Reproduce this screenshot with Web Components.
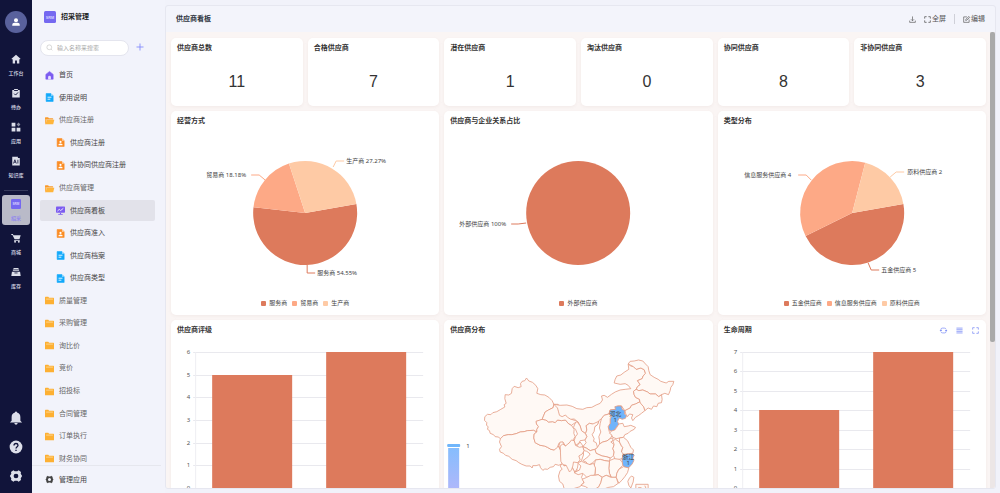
<!DOCTYPE html>
<html lang="zh-CN">
<head>
<meta charset="utf-8">
<title>供应商看板</title>
<style>
  html, body { height: 100%; margin: 0; }
  body {
    background: #f1f2fa;
    color: #333;
    font: 7px/10px "Noto Sans", "Noto Sans CJK SC", sans-serif;
  }
</style>
</head>
<body>
<srm-app></srm-app>

<script>
const ICONS = {
  user: '<circle cx="8" cy="5" r="3.2" fill="currentColor"/><path d="M2 14v-1.500q0-3.500 3.500-3.500h5q3.500 0 3.500 3.500V14z" fill="currentColor"/>',
  home: '<path d="M8 1 .8 7.600l1 1.100.9-.8V15h3.800v-4.500h3V15h3.800V7.900l.9.8 1-1.100z" fill="currentColor"/>',
  todo: '<path d="M2 3h3V1.500h6V3h3v12H2z" fill="currentColor"/><path d="M5 4h6M5 9l2.300 2.300L11.300 7" fill="none" stroke="#11143a" stroke-width="1.500"/>',
  apps: '<path d="M1 1h6v6H1zM1 9h6v6H1zM9 9h6v6H9z" fill="currentColor"/><path d="m12 .8 3 3.200-3 3.200-3-3.200z" fill="currentColor" opacity=".6"/>',
  book: '<path d="M2 1h9v2h3v12H2z" fill="currentColor"/><path d="m4 12 2.200-6L8.500 12M5 10h2.500M11 6v6" fill="none" stroke="#11143a" stroke-width="1.300"/>',
  srm: '<rect x="0" y="0" width="16" height="16" rx="2" fill="#7568f0"/><text x="8" y="10" text-anchor="middle" font-family="Liberation Sans, sans-serif" font-weight="700" font-size="5" fill="#d5d0ff">SRM</text>',
  cart: '<path d="M.5 1.500h2.600l.8 2H15.500L13.500 10H5.800L2.300 3H.5zM5 11h9v1.300H5z" fill="currentColor"/><circle cx="6.500" cy="14" r="1.500" fill="currentColor"/><circle cx="12.500" cy="14" r="1.500" fill="currentColor"/>',
  stock: '<path d="M4 1.500h8v1.500H4zM3 4h10v2H3zM1.500 7.500h13l1 7H.5z" fill="currentColor"/><path d="M5.500 9.500h5" stroke="#11143a" stroke-width="1.300"/>',
  bell: '<path d="M8 .5q1.200 0 1.200 1.300C12 2.500 13 4.500 13 7v4l2 2H1l2-2V7c0-2.500 1-4.500 3.800-5.200Q6.800.5 8 .5zM6 13.800h4Q9.500 15.700 8 15.700T6 13.800z" fill="currentColor"/>',
  help: '<circle cx="8" cy="8" r="7.300" fill="currentColor"/><path d="M5.700 6.300q.1-2.300 2.300-2.300t2.300 2.100C10.300 7.700 8 7.700 8 9.800M8 11v1.600" fill="none" stroke="#11143a" stroke-width="1.500"/>',
  gear: '<path fill-rule="evenodd" d="m5 1.500 1.500 1h3l1.500-1 2.700 2-.3 1.800L15 8l-1.600 2.700.3 1.800-2.700 2-1.500-1h-3l-1.500 1-2.700-2 .3-1.800L1 8l1.600-2.700-.3-1.800zM8 5.300a2.700 2.700 0 1 0 0 5.400 2.700 2.700 0 1 0 0-5.400z" fill="currentColor"/>',
  house: '<path d="M8 .8 1.500 6v8.500h13V6z" fill="#7c5cf0" stroke="#7c5cf0" stroke-linejoin="round"/><path d="M5.500 15v-4a2.500 2.500 0 0 1 5 0v4z" fill="#e6dfff"/>',
  doc: '<path d="M2 1h8.500L14.500 5v10H2z" fill="#12a9fb" stroke="#12a9fb" stroke-linejoin="round"/><path d="M10.500 1v4h4z" fill="#9fdcff"/><path d="M4.500 7.500h7M4.500 11h5" stroke="#fff" stroke-width="1.500"/>',
  form: '<path d="M2 1h8.500L14.500 5v10H2z" fill="#fb8d25" stroke="#fb8d25" stroke-linejoin="round"/><path d="M10.500 1v4h4z" fill="#ffd6ab"/><circle cx="8" cy="7" r="1.900" fill="#fff"/><path d="M4.500 12.800V11q3.500-2.600 7 0v1.800z" fill="#fff"/>',
  open: '<path d="M0 3q0-1 1-1h4.500l1.500 1.800h6.500q1 0 1 1V6H0z" fill="#f99a2b"/><path d="M3 6.500h13.500L14.500 14.500H1z" fill="#ffb53b"/><path d="M0 5v9.500h1L3 6.500z" fill="#fdb04a"/>',
  folder: '<path d="M0 2.500q0-1 1-1h4.800l1.500 1.800h7.700q1 0 1 1v10.200H0z" fill="#fdb033"/><path d="M2 5.500h12" stroke="#fff0d2" stroke-width="1"/>',
  board: '<rect x="0" y="1" width="16" height="11" rx="1.200" fill="#7c5cf0"/><path d="M7 12h2v2h3v1.500H4V14h3z" fill="#7c5cf0"/><path d="m2.500 9 3.300-3 2.500 2L13 4.200" fill="none" stroke="#fff" stroke-width="1.500"/>',
  search: '<circle cx="7.500" cy="7.500" r="5.500" fill="none" stroke="currentColor" stroke-width="1.300"/><path d="m11.500 11.500 3 3" stroke="currentColor" stroke-width="1.300"/>',
  plus: '<path d="M8 1v14M1 8h14" stroke="currentColor" stroke-width="1.700"/>',
  download: '<path d="M8 1v9.500M4.500 7.500 8 11l3.500-3.500M1.500 10.500v4h13v-4" fill="none" stroke="currentColor" stroke-width="1.500"/>',
  full: '<path d="M1.500 6V1.500H6M10 1.500h4.500V6M14.500 10v4.500H10M6 14.500H1.500V10" fill="none" stroke="currentColor" stroke-width="1.700"/>',
  edit: '<path d="M9 2H1.500v12.500H14V8M6 10l.5-2.500L13.500 1l2 2L8.500 9.700z" fill="none" stroke="currentColor" stroke-width="1.500"/>',
  refresh: '<path d="M2 8.500V6q0-3.500 3.500-3.500H10q3 0 3.800 2.500M14 7.500V10q0 3.500-3.500 3.500H6q-3 0-3.800-2.500" fill="none" stroke="currentColor" stroke-width="1.700"/><path d="M-1 7h6L2 10.500zM11 9h6L14 5.500z" fill="currentColor"/>',
  menu: '<path d="M1 2.500h14M1 6.200h14M1 9.900h14M1 13.600h14" stroke="currentColor" stroke-width="1.800"/>'
};

function define(name, render) {
  customElements.define(name, class extends HTMLElement {
    constructor() {
      super();
      this.attachShadow({ mode: 'open' });
    }
    connectedCallback() {
      this.shadowRoot.innerHTML = render(this);
    }
  });
}

define('ui-icon', el => `
  <style>
    :host { display: inline-flex; flex: none; width: var(--icon-size, 10px); height: var(--icon-size, 10px); }
    svg { width: 100%; height: 100%; display: block; overflow: visible; }
  </style>
  <svg viewBox="0 0 16 16" aria-hidden="true">${ICONS[el.getAttribute('name')]}</svg>`);

/* Dark strip with the main modules */
define('rail-item', el => `
  <style>
    :host { display: block; color: #dddfea; }
    a {
      display: flex; flex-direction: column; align-items: center; justify-content: center; gap: 5px;
      height: 30px; margin: 0 2px; border-radius: 3px; color: inherit; text-decoration: none;
      font-size: 5px; line-height: 8px; font-weight: 500; white-space: nowrap;
    }
    :host([active]) { color: #8c80f2; }
    :host([active]) a { background: #b9bac8; }
  </style>
  <a href="#${el.getAttribute('icon')}"><ui-icon name="${el.getAttribute('icon')}"></ui-icon><slot></slot></a>`);

define('app-rail', () => `
  <style>
    :host {
      display: flex; flex-direction: column; gap: 4px; flex: none; width: 32px; box-sizing: border-box;
      padding: 11px 0 10px; background: #11143a; color: #dddfea;
    }
    button { border: 0; padding: 0; background: none; color: inherit; display: flex; justify-content: center; }
    .avatar {
      --icon-size: 10px; width: 22px; height: 22px; margin: 0 auto 13px; flex: none;
      align-items: center; border-radius: 50%; background: #59619c; color: #fff;
    }
    hr { width: 24px; height: 4px; margin: 0 auto; border: 0; border-bottom: 1px solid #363a5c; flex: none; }
    .tools { --icon-size: 14px; display: flex; flex-direction: column; gap: 15px; margin-top: auto; }
  </style>
  <button class="avatar" aria-label="个人中心"><ui-icon name="user"></ui-icon></button>
  <rail-item icon="home">工作台</rail-item>
  <rail-item icon="todo">待办</rail-item>
  <rail-item icon="apps">应用</rail-item>
  <rail-item icon="book">知识库</rail-item>
  <hr>
  <rail-item icon="srm" active>招采</rail-item>
  <rail-item icon="cart">商城</rail-item>
  <rail-item icon="stock">库存</rail-item>
  <div class="tools">
    <button aria-label="通知"><ui-icon name="bell"></ui-icon></button>
    <button aria-label="帮助"><ui-icon name="help"></ui-icon></button>
    <button aria-label="设置"><ui-icon name="gear"></ui-icon></button>
  </div>`);

/* Light menu of the current module */
define('menu-item', el => `
  <style>
    :host { display: flex; align-items: center; min-height: 0; --icon-size: 9px; }
    a {
      flex: 1; display: flex; align-items: center; gap: 5px; height: 21px; padding-left: 5px;
      border-radius: 2px; color: #444; text-decoration: none; white-space: nowrap;
    }
    :host([group]) a { color: #666; }
    :host([sub]) a { padding-left: 16px; }
    :host([active]) a { background: #e2e2ea; }
  </style>
  <a href="#"><ui-icon name="${el.getAttribute('icon')}"></ui-icon><slot></slot></a>`);

define('side-menu', () => `
  <style>
    :host {
      display: flex; flex-direction: column; flex: none; width: 133px; box-sizing: border-box;
      padding: 0 10px 0 8px; background: #f2f3fb;
    }
    header { display: flex; align-items: center; gap: 5px; height: 34px; padding-left: 4px; }
    h1 { margin: 0; font-size: 7px; color: #222; }
    header ui-icon { --icon-size: 12px; }
    form { display: flex; align-items: center; gap: 7px; height: 17px; margin: 5px 0 8px; }
    label {
      display: flex; align-items: center; gap: 4px; width: 89px; height: 16px; box-sizing: border-box;
      padding: 0 5px; border: 1px solid #e4e5ee; border-radius: 8px; background: #fff; color: #bbb; --icon-size: 7px;
    }
    input { flex: 1; min-width: 0; padding: 0; border: 0; outline: 0; background: none; font: inherit; font-size: 6px; }
    input::placeholder { color: #aaa; opacity: 1; }
    button { border: 0; padding: 0; width: 9px; height: 9px; background: none; color: #7f88fb; display: flex; --icon-size: 8px; }
    nav {
      flex: 1; min-height: 0; overflow: hidden; display: grid; grid-template-rows: repeat(18, minmax(21px, 1fr));
      margin-bottom: -5px;
    }
    footer {
      display: flex; align-items: center; height: 27px; margin: 0 -6px 0 -8px; padding-left: 8px;
      border-top: 1px solid #e6e7ee; background: #f2f3fb; flex: none; position: relative;
    }
    footer menu-item { flex: 1; color: #222; }
  </style>
  <header><ui-icon name="srm"></ui-icon><h1>招采管理</h1></header>
  <form role="search">
    <label><ui-icon name="search"></ui-icon><input type="text" aria-label="搜索" placeholder="输入名称来搜索"></label>
    <button type="button" aria-label="新增"><ui-icon name="plus"></ui-icon></button>
  </form>
  <nav>
    <menu-item icon="house">首页</menu-item>
    <menu-item icon="doc">使用说明</menu-item>
    <menu-item icon="open" group>供应商注册</menu-item>
    <menu-item icon="form" sub>供应商注册</menu-item>
    <menu-item icon="form" sub>非协同供应商注册</menu-item>
    <menu-item icon="open" group>供应商管理</menu-item>
    <menu-item icon="board" sub active>供应商看板</menu-item>
    <menu-item icon="form" sub>供应商准入</menu-item>
    <menu-item icon="doc" sub>供应商档案</menu-item>
    <menu-item icon="doc" sub>供应商类型</menu-item>
    <menu-item icon="folder" group>质量管理</menu-item>
    <menu-item icon="folder" group>采购管理</menu-item>
    <menu-item icon="folder" group>询比价</menu-item>
    <menu-item icon="folder" group>竞价</menu-item>
    <menu-item icon="folder" group>招投标</menu-item>
    <menu-item icon="folder" group>合同管理</menu-item>
    <menu-item icon="folder" group>订单执行</menu-item>
    <menu-item icon="folder" group>财务协同</menu-item>
  </nav>
  <footer><menu-item icon="gear">管理应用</menu-item></footer>`);

/* White card: title, optional tools, content */
define('dash-card', el => `
  <style>
    :host { display: block; min-width: 0; border-radius: 5px; background: #fff; box-shadow: 0 1px 3px #e9dcd966; }
    header { display: flex; align-items: center; justify-content: space-between; height: 20px; padding: 0 7px 0 6px; }
    h2 { margin: 0; font-size: 7px; font-weight: 600; color: #333; white-space: nowrap; }
  </style>
  <header><h2>${el.getAttribute('heading')}</h2><slot name="tools"></slot></header>
  <slot></slot>`);

define('stat-value', () => `
  <style>
    :host { display: flex; align-items: center; justify-content: center; height: 48px; color: #333; font: 16px/20px "Liberation Sans", Arial, sans-serif; }
  </style>
  <slot></slot>`);

/* Pie with leader lines; slices follow the compass clockwise from 80 degrees */
const PIES = {
  mode: [
    { name: '服务商', value: 6, label: '服务商 54.55%', line: '2,52 2,60 10,60', x: 12 },
    { name: '贸易商', value: 2, label: '贸易商 18.18%', line: '-40,-33 -46,-38 -54,-38', x: -59 },
    { name: '生产商', value: 3, label: '生产商 27.27%', line: '28,-46 31,-52 39,-52', x: 41 }
  ],
  relation: [
    { name: '外部供应商', value: 11, label: '外部供应商 100%', line: '-52,10 -60,11 -67,11', x: -72 }
  ],
  type: [
    { name: '五金供应商', value: 5, label: '五金供应商 5', line: '16,50 19,57 27,57', x: 29 },
    { name: '信息服务供应商', value: 4, label: '信息服务供应商 4', line: '-41,-33 -46,-38 -54,-38', x: -61 },
    { name: '原料供应商', value: 2, label: '原料供应商 2', line: '38,-36 44,-41 52,-41', x: 55 }
  ]
};
const COLORS = ['#dd7a5c', '#fda986', '#fecaa5'];

define('pie-chart', el => {
  const data = PIES[el.getAttribute('data')], r = 52;
  const total = data.reduce((s, d) => s + d.value, 0);
  const at = deg => `${(r * Math.sin(deg * Math.PI / 180)).toFixed(2)},${(-r * Math.cos(deg * Math.PI / 180)).toFixed(2)}`;
  let angle = 80, shapes = '';
  data.forEach((d, i) => {
    const sweep = d.value / total * 360, end = angle + sweep, y = d.line.split(',').pop();
    shapes += data.length === 1
      ? `<circle r="${r}" fill="${COLORS[i]}"/>`
      : `<path d="M0,0L${at(angle)}A${r},${r} 0 ${sweep > 180 ? 1 : 0} 1 ${at(end)}Z" fill="${COLORS[i]}"/>`;
    shapes += `<polyline points="${d.line}" fill="none" stroke="${COLORS[i]}"/>
      <text x="${d.x}" y="${y}" text-anchor="${d.x < 0 ? 'end' : 'start'}" dominant-baseline="central">${d.label}</text>`;
    angle = end;
  });
  return `
  <style>
    :host { display: block; }
    svg { display: block; width: 100%; height: 166px; }
    text { font-size: 6px; fill: #444; }
    ul { display: flex; justify-content: center; gap: 5px; height: 12px; margin: 0; padding: 0 0 6px; list-style: none; font-size: 6px; line-height: 12px; color: #444; }
    li { display: flex; align-items: center; gap: 3px; }
    i { width: 5px; height: 5px; border-radius: 1px; }
  </style>
  <svg viewBox="-134 -82 268 166">${shapes}</svg>
  <ul>${data.map((d, i) => `<li><i style="background:${COLORS[i]}"></i>${d.name}</li>`).join('')}</ul>`;
});

define('bar-chart', el => {
  const values = el.getAttribute('values').split(',').map(Number), max = Math.max(...values);
  const y = v => Math.round(148 - v * 136 / max);
  let out = '';
  for (let v = 0; v <= max; v++) {
    out += `<path d="M22,${y(v)}.5H252" stroke="#e9e9ee"/><text x="19" y="${y(v)}" text-anchor="end" dominant-baseline="central">${v}</text>`;
  }
  out += '<path d="M24.5,12V148" stroke="#eeeef2"/>';
  values.forEach((v, i) => { out += `<rect x="${41 + i * 114}" y="${y(v)}" width="80" height="${148 - y(v)}" fill="#dd7a5c"/>`; });
  return `
  <style>
    :host { display: block; }
    svg { display: block; width: 100%; height: 176px; }
    text { font-size: 6px; fill: #555; }
  </style>
  <svg viewBox="0 0 268 176">${out}</svg>`;
});

/* Province outlines: west and east halves are drawn on a grid three times finer than the page */
define('china-map', () => `
  <style>
    :host { display: block; }
    svg { display: block; width: 100%; height: 176px; }
    .land path { fill: #fff9f5; stroke: #e39a82; stroke-width: 2.400; stroke-linejoin: round; }
    .land .hot { fill: #70b4fb; }
    text { font-size: 6px; fill: #444; }
  </style>
  <svg viewBox="0 0 268 176">
    <defs><linearGradient id="scale" x1="0" y1="0" x2="0" y2="1"><stop offset="0" stop-color="#86bdfd"/><stop offset="1" stop-color="#c1b5f9"/></linearGradient></defs>
    <rect x="4" y="108" width="11" height="60" fill="url(#scale)"/>
    <rect x="3" y="104" width="13" height="3" rx="1" fill="#70b6fb"/>
    <text x="22" y="106" dominant-baseline="central">1</text>
    <g class="land" transform="translate(-4 0) scale(.3333)">
      <path d="M259,114 266,123 277,127 287,136 293,146 290,160 302,164 314,165 326,172 336,182 341,193 339,203 325,210 315,216 310,228 306,238 296,242 288,244 289,252 295,260 290,268 290,276 280,271 262,272 252,275 240,276 228,281 215,284 204,284 190,287 186,293 181,296 174,291 165,290 160,284 150,280 148,272 142,268 144,260 139,256 140,248 133,241 134,230 142,223 152,224 158,218 170,215 182,208 194,201 192,194 198,190 194,176 195,164 206,165 214,160 216,146 222,139 234,143 243,140 241,131 246,124 254,122z"/>
      <path d="M181,296 190,287 204,284 215,284 228,281 240,276 252,275 262,272 280,271 290,276 282,282 281,294 285,308 300,316 313,318 322,322 332,328 342,330 348,320 354,318 362,332 367,345 366,358 368,370 356,376 345,373 340,380 330,382 322,388 314,387 308,391 301,383 298,374 288,377 278,377 276,384 270,378 258,378 245,373 236,368 228,362 216,358 206,349 196,346 190,340 180,336 178,328 184,320 178,306z"/>
      <path d="M306,238 317,240 325,246 338,245 345,248 352,240 364,242 376,240 384,250 394,256 402,268 401,280 405,290 400,298 397,312 388,308 383,320 374,316 368,306 356,310 352,322 342,330 332,328 322,322 313,318 300,316 285,308 281,294 282,282 290,276 290,268 295,260 289,252 288,244z"/>
      <path d="M341,193 354,193 358,204 355,214 366,220 376,218 381,228 390,228 394,238 406,242 410,236 420,240 424,252 414,258 408,246 394,256 384,250 376,240 364,242 352,240 345,248 338,245 325,246 317,240 306,238 310,228 315,216 325,210 339,203z"/>
      <path d="M367,345 362,332 356,318 360,306 368,306 374,316 383,320 388,308 397,312 410,318 420,306 430,320 430,345 424,362 414,370 412,384 404,397 396,382 384,374 372,378 368,370 366,358z"/>
      <path d="M368,370 372,378 384,374 396,382 404,397 412,390 430,398 424,412 432,426 420,440 400,446 372,446 368,432 358,424 355,408 360,392 366,388 360,378z"/>
    </g>
    <g class="land" transform="translate(116 0) scale(.3333)">
      <path d="M-19,193 0,196 20,195 36,199 50,206 68,208 80,203 95,202 108,195 120,190 127,180 124,168 132,166 142,172 154,163 165,156 180,150 195,148 212,146 204,136 195,131 180,133 162,129 165,118 170,108 182,105 192,97 206,88 204,72 212,78 220,80 228,88 242,84 252,89 256,100 249,108 246,116 232,122 240,134 232,140 228,148 220,154 222,164 226,172 238,178 238,186 226,192 214,196 210,204 198,210 194,212 184,198 172,198 168,208 150,210 146,222 132,226 124,236 116,242 112,254 104,260 98,252 88,250 78,257 80,270 76,281 64,272 60,258 54,246 42,237 32,238 22,232 16,225 6,230 -2,226 -5,215 -8,204z"/>
      <path d="M204,72 210,64 222,63 235,60 248,63 256,72 264,80 266,92 270,104 282,112 294,118 302,124 318,129 326,124 341,124 338,134 332,142 330,152 325,164 314,160 304,164 296,170 286,162 270,162 262,156 248,150 236,152 228,148 232,140 240,134 232,122 246,116 249,108 256,100 252,89 242,84 228,88 220,80z"/>
      <path d="M228,148 236,152 248,150 262,156 270,162 286,162 296,170 304,164 306,178 304,188 294,190 290,200 280,198 274,208 264,204 254,212 250,200 240,190 238,178 226,172 222,164 220,154z"/>
      <path d="M238,186 250,200 254,212 244,220 236,226 226,232 218,242 214,234 218,224 208,222 202,230 197,222 194,212 210,204 214,196 226,192z"/>
      <path class="hot" d="M150,210 166,208 164,200 172,198 184,198 186,208 194,212 193,222 199,227 196,235 186,238 178,234 172,244 176,254 170,260 164,270 154,273 147,270 144,260 150,250 150,236 154,228 147,222z"/>
      <path d="M146,222 132,226 124,236 120,250 118,264 122,276 116,290 118,302 118,312 128,306 140,303 150,296 156,286 147,274 144,260 150,250 150,236 154,228z"/>
      <path d="M170,262 176,252 188,250 192,260 204,258 212,256 226,262 222,268 210,274 204,280 194,284 190,292 178,294 168,296 158,292 154,284 148,280 154,273 164,270z"/>
      <path d="M118,312 128,306 140,303 150,296 158,294 158,302 152,306 162,314 158,326 162,336 160,346 152,354 138,350 126,348 108,340 104,328 112,322z"/>
      <path d="M116,244 112,254 104,260 102,274 96,284 102,296 100,304 108,308 112,322 104,328 90,332 78,324 68,320 78,308 74,300 80,290 76,281 80,270 78,257 88,250 98,252z"/>
      <path d="M50,244 60,258 64,272 76,281 80,290 74,300 60,302 56,310 46,316 42,302 46,290 52,282 46,268 40,262 44,252z"/>
      <path d="M0,318 8,312 16,318 28,308 34,300 42,302 46,316 58,322 68,320 72,332 66,342 56,348 60,360 52,368 40,366 38,378 34,390 28,396 22,384 18,376 8,374 2,364z"/>
      <path d="M68,320 78,324 90,332 104,328 108,340 126,348 138,350 150,354 148,364 134,362 120,358 106,360 98,368 84,376 78,366 68,362 84,350 90,342 80,334 72,332z"/>
      <path d="M162,314 158,302 166,298 178,306 184,318 188,322 184,336 192,344 186,356 178,358 166,362 160,346 162,336 158,326z"/>
      <path d="M178,294 190,292 202,302 208,314 212,322 220,330 218,340 204,342 192,344 184,336 188,322 184,318 178,306z"/>
      <path class="hot" d="M188,344 200,342 216,340 222,346 218,354 221,362 216,372 206,383 194,382 186,374 186,356z"/>
      <path d="M148,362 162,356 178,358 186,366 188,376 176,388 170,400 168,412 154,412 148,400 146,385z"/>
      <path d="M206,384 202,398 194,410 186,420 176,430 168,412 170,400 176,388 190,380z"/>
      <path d="M106,360 120,358 134,362 148,364 146,385 148,400 152,410 138,406 126,412 114,404 104,406 106,390 102,376z"/>
      <path d="M52,368 64,364 78,370 90,374 100,370 106,384 104,404 92,410 80,412 68,400 54,404 42,398 58,390 62,378z"/>
      <path d="M80,412 92,406 104,406 114,404 126,412 122,428 116,440 104,448 88,448 76,440 62,436 72,428 66,418z"/>
      <path d="M126,412 138,406 152,412 168,412 174,430 160,440 146,442 128,448 108,448 116,440 122,428z"/>
      <path d="M214,408 221,412 219,426 212,444 206,436 203,424 208,414z"/>
      <path d="M227,433h37v24h-37zM234,443l10 0M254,437l4 9"/>
    </g>
    <text x="171" y="74" text-anchor="middle" dominant-baseline="central">河北</text>
    <text x="171" y="80" text-anchor="middle" dominant-baseline="central">1</text>
    <text x="184" y="117" text-anchor="middle" dominant-baseline="central">浙江</text>
    <text x="184" y="123" text-anchor="middle" dominant-baseline="central">1</text>
  </svg>`);

define('card-tools', () => `
  <style>
    :host { display: flex; gap: 8px; --icon-size: 7px; }
    button { border: 0; padding: 0; width: 8px; height: 8px; background: none; color: #7d8df6; display: flex; align-items: center; justify-content: center; }
  </style>
  <button aria-label="刷新"><ui-icon name="refresh"></ui-icon></button>
  <button aria-label="明细"><ui-icon name="menu"></ui-icon></button>
  <button aria-label="放大"><ui-icon name="full"></ui-icon></button>`);

define('dash-board', () => `
  <style>
    :host {
      display: flex; flex-direction: column; flex: 1; min-width: 0; margin: 5px 4px 4px 0; overflow: hidden;
      border: 1px solid #e6e7f0; border-radius: 3px; background: #f3f4fb;
    }
    .bar { display: flex; align-items: center; height: 26px; padding: 0 10px; flex: none; color: #555; --icon-size: 7px; }
    h1 { flex: 1; margin: 0; font-size: 7px; font-weight: 600; color: #2e3440; }
    button { display: flex; align-items: center; gap: 1px; border: 0; padding: 0; margin-left: 8px; background: none; font: inherit; color: inherit; white-space: nowrap; }
    hr { width: 1px; height: 10px; margin: 0 0 0 8px; border: 0; background: #cfd0d8; }
    .body { flex: 1; min-height: 0; display: flex; background: #faf5f4; }
    .scroll { flex: 1; min-width: 0; overflow-y: auto; scrollbar-width: none; padding: 6px 4px 0 5px; }
    .row { display: grid; grid-template-columns: repeat(3, 1fr); gap: 5px; margin-bottom: 5px; }
    .stats { grid-template-columns: repeat(6, 1fr); }
    .track { width: 5px; background: #ece6e6; }
    .thumb { height: 68%; border-radius: 2px; background: #a9a9a9; }
  </style>
  <div class="bar">
    <h1>供应商看板</h1>
    <button aria-label="下载"><ui-icon name="download"></ui-icon></button>
    <button><ui-icon name="full"></ui-icon>全屏</button>
    <hr>
    <button><ui-icon name="edit"></ui-icon>编辑</button>
  </div>
  <div class="body">
    <div class="scroll">
      <div class="row stats">
        <dash-card heading="供应商总数"><stat-value>11</stat-value></dash-card>
        <dash-card heading="合格供应商"><stat-value>7</stat-value></dash-card>
        <dash-card heading="潜在供应商"><stat-value>1</stat-value></dash-card>
        <dash-card heading="淘汰供应商"><stat-value>0</stat-value></dash-card>
        <dash-card heading="协同供应商"><stat-value>8</stat-value></dash-card>
        <dash-card heading="非协同供应商"><stat-value>3</stat-value></dash-card>
      </div>
      <div class="row">
        <dash-card heading="经营方式"><pie-chart data="mode"></pie-chart></dash-card>
        <dash-card heading="供应商与企业关系占比"><pie-chart data="relation"></pie-chart></dash-card>
        <dash-card heading="类型分布"><pie-chart data="type"></pie-chart></dash-card>
      </div>
      <div class="row">
        <dash-card heading="供应商评级"><bar-chart values="5,6"></bar-chart></dash-card>
        <dash-card heading="供应商分布"><china-map></china-map></dash-card>
        <dash-card heading="生命周期"><card-tools slot="tools"></card-tools><bar-chart values="4,7"></bar-chart></dash-card>
      </div>
    </div>
    <div class="track"><div class="thumb"></div></div>
  </div>`);

define('srm-app', () => `
  <style>:host { display: flex; height: 100vh; overflow: hidden; }</style>
  <app-rail></app-rail>
  <side-menu></side-menu>
  <dash-board></dash-board>`);
</script>
</body>
</html>
